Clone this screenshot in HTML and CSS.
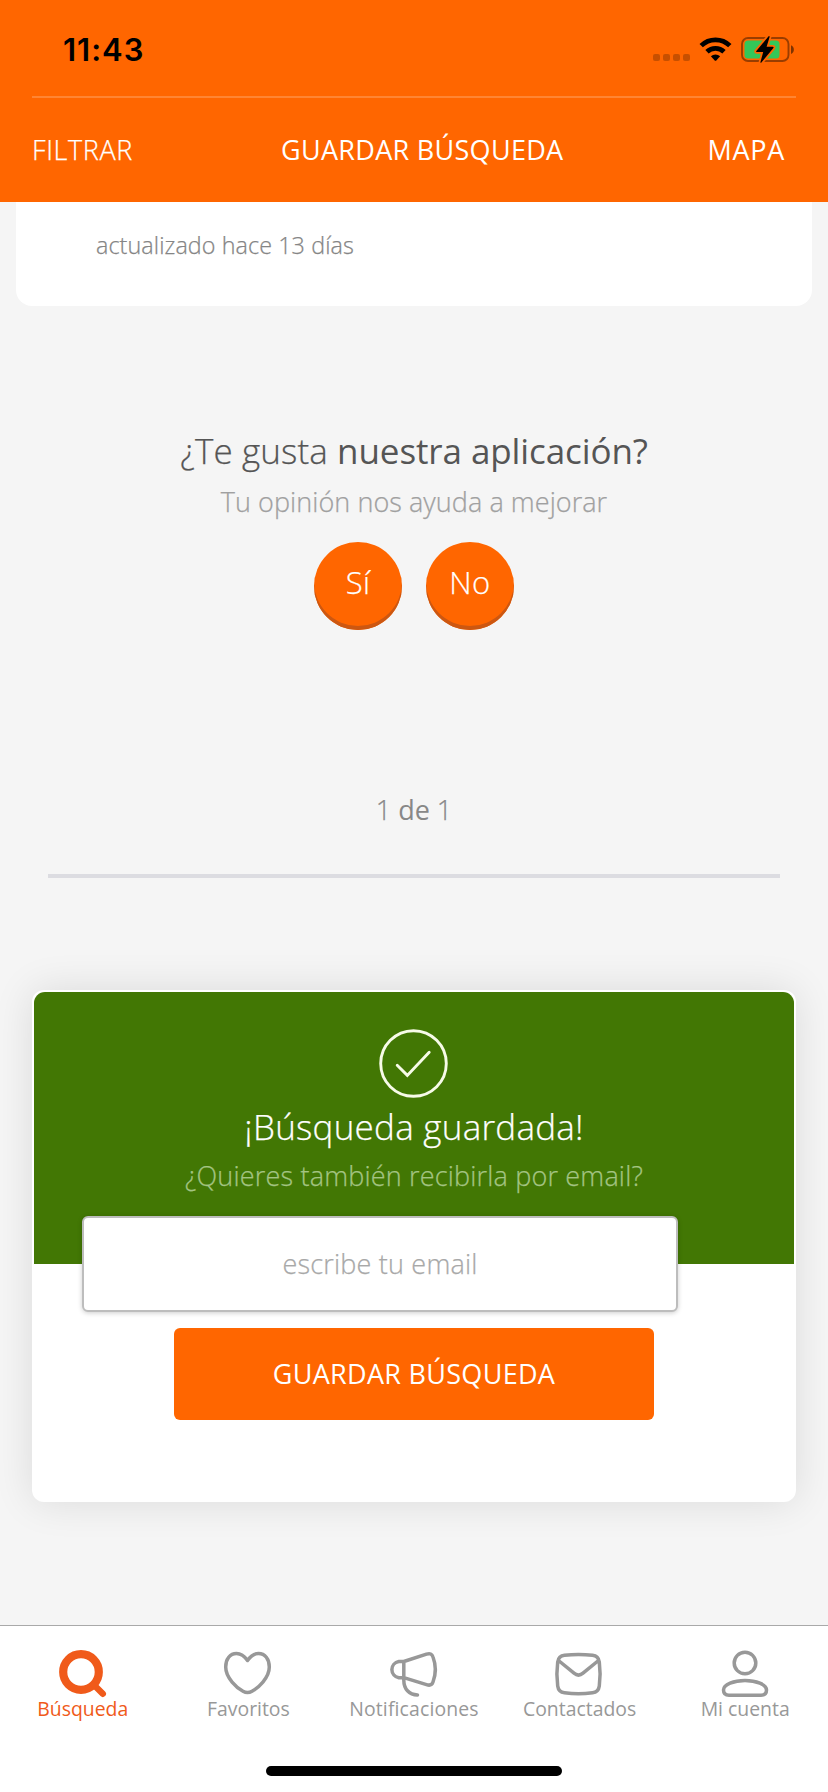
FILE: index.html
```
<!DOCTYPE html>
<html lang="es">
<head>
<meta charset="utf-8">
<title>Búsqueda</title>
<link rel="stylesheet" href="styles.css">
</head>
<body>
<div class="screen">
  <header class="header">
    <div class="status">
      <span class="time">11:43</span>
      <svg class="status-icons" viewBox="650 34 146 32">
        <g fill="#000" fill-opacity=".22"><rect x="653" y="54" width="7" height="7" rx="2"/><rect x="663" y="54" width="7" height="7" rx="2"/><rect x="673" y="54" width="7" height="7" rx="2"/><rect x="683" y="54" width="7" height="7" rx="2"/></g>
        <g fill="none" stroke="#000" stroke-width="4.8"><path d="M701.2 45.6a20.5 20.5 0 0 1 28.6 0"/><path d="M707 51.7a12.4 12.4 0 0 1 17 0"/></g>
        <path d="M710.9 56.3a6.8 6.8 0 0 1 9.2 0l-3.8 4.1q-.8.8-1.6 0z"/>
        <rect x="742" y="38" width="46.5" height="23" rx="6" fill="none" stroke="#000" stroke-opacity=".4" stroke-width="1.9"/>
        <path d="M791 45.3c3.8 1.6 3.8 7.2 0 8.8z" fill-opacity=".5"/>
        <rect x="744.5" y="40.5" width="35" height="18" rx="3.5" fill="#34c759"/>
        <path d="M768.6 36.3l-12.3 14.6q-.6 1.1.7 1.1h6.2l-2.8 10.2q.2 1 1.2 0l11.8-14.3q.6-1.2-.7-1.2h-6.1l3-9.7q0-1.3-1-.7z" stroke="#ff6600" stroke-width="3.6" paint-order="stroke"/>
      </svg>
    </div>
    <nav class="nav">
      <span class="nav-filter">FILTRAR</span>
      <span class="nav-save">GUARDAR BÚSQUEDA</span>
      <span class="nav-map">MAPA</span>
    </nav>
  </header>

  <main class="content">
    <div class="listing">actualizado hace 13 días</div>

    <section class="rate">
      <h2 class="rate-title">¿Te gusta <b>nuestra aplicación?</b></h2>
      <p class="rate-sub">Tu opinión nos ayuda a mejorar</p>
      <div class="rate-buttons">
        <button class="round yes">Sí</button>
        <button class="round no">No</button>
      </div>
    </section>

    <p class="pager">1 <span>de</span> 1</p>
    <div class="rule"></div>

    <section class="saved">
      <div class="saved-top">
        <svg class="check" viewBox="0 0 70 70" fill="none" stroke="#f7fbe8" stroke-width="2.9"><circle cx="34.5" cy="34.5" r="32.8"/><path d="M18.2 36.3L28.3 46.4L50.2 23.2" stroke-linecap="round"/></svg>
        <h2 class="saved-title">¡Búsqueda guardada!</h2>
        <p class="saved-sub">¿Quieres también recibirla por email?</p>
      </div>
      <input class="email" type="text" placeholder="escribe tu email">
      <button class="save">GUARDAR BÚSQUEDA</button>
    </section>
  </main>

  <footer class="footer">
    <div class="tabs">
      <div class="tab active">
        <svg class="icon" viewBox="55 1642 56 55"><circle cx="81" cy="1672" r="17.8" stroke-width="8.2"/><path d="M94 1685L102.8 1693.8" stroke-width="6.4"/></svg>
        <span>Búsqueda</span>
      </div>
      <div class="tab">
        <svg class="icon" viewBox="220 1642 56 55"><path d="M247.5 1660.5C244 1655.5 240 1653.5 236.5 1653.5C230 1653.5 225.7 1659 225.7 1667C225.7 1678 237 1688 243 1691.3C246 1693 249 1693 252 1691.3C258 1688 269.3 1678 269.3 1667C269.3 1659 265 1653.5 258.5 1653.5C255 1653.5 251 1655.5 247.5 1660.5Z"/></svg>
        <span>Favoritos</span>
      </div>
      <div class="tab">
        <svg class="icon" viewBox="386 1642 56 55"><path d="M403.8 1661.5H398.8a8.2 8.2 0 0 0 0 16.2H403.8L426.5 1684.7C430 1685.8 432 1685 433 1682C436 1674 436 1665 433 1657C432 1654 430 1653 426.5 1654.2L403.8 1661.5V1680C403.8 1689 409 1694.8 417.5 1695"/></svg>
        <span class="wide">Notificaciones</span>
      </div>
      <div class="tab">
        <svg class="icon" viewBox="551.5 1642 56 55"><path d="M564 1655.3Q578 1653.5 592 1655.3Q598 1656 598.8 1662Q600.4 1674 598.8 1686Q598 1692 592 1692.8Q578 1694.6 564 1692.8Q558 1692 557.2 1686Q555.6 1674 557.2 1662Q558 1656 564 1655.3ZM558 1660.5L573.5 1673.2Q578 1677 582.5 1673.2L598 1660.5"/></svg>
        <span>Contactados</span>
      </div>
      <div class="tab">
        <svg class="icon" viewBox="717 1642 56 55"><circle cx="745" cy="1663" r="10.8"/><path d="M729 1695.2C724.8 1695.2 723.5 1692.5 723.5 1690C723.5 1684.5 734 1680.5 745 1680.5S766.5 1684.5 766.5 1690C766.5 1692.5 765.2 1695.2 761 1695.2Z"/></svg>
        <span>Mi cuenta</span>
      </div>
    </div>
    <div class="home"></div>
  </footer>
</div>
</body>
</html>
```
FILE: styles.css
```
* { box-sizing: border-box; margin: 0; padding: 0; }
body { background: #f5f5f5; font-family: "Open Sans", "Noto Sans", sans-serif; font-weight: 300; }
button, input { font: inherit; border: 0; }
.screen { width: 828px; height: 1792px; display: flex; flex-direction: column; overflow: hidden; }

.header { height: 202px; background: #ff6600; color: #fff; }
.status { height: 98px; margin: 0 32px; padding-left: 31px; border-bottom: 2px solid #ff8533; display: flex; justify-content: space-between; align-items: flex-start; }
.time { font: 600 31px/99px Inter, sans-serif; color: #000; letter-spacing: 1px; }
.status-icons { width: 146px; height: 32px; margin-top: 34px; }
.nav { display: grid; grid-template-columns: 249px 1fr auto; padding: 0 43px 0 32px; font-size: 27px; line-height: 103px; }
.nav-filter { letter-spacing: .6px; -webkit-text-stroke: .25px; }
.nav-save { font-weight: 400; letter-spacing: .3px; }
.nav-map { font-weight: 400; letter-spacing: .7px; }

.content { flex: 1; display: flex; flex-direction: column; }
.listing { height: 104px; margin: 0 16px; padding: 25px 80px 0; background: #fff; border-radius: 0 0 16px 16px; color: #858585; font-size: 23.3px; line-height: 36px; letter-spacing: .1px; -webkit-text-stroke: .25px; }
.rate { margin-top: 123px; text-align: center; }
.rate-title { color: #555; font-size: 35px; line-height: 44px; font-weight: 300; letter-spacing: .1px; -webkit-text-stroke: .25px; }
.rate-title b { font-weight: 500; letter-spacing: -.1px; -webkit-text-stroke: 0; }
.rate-sub { margin-top: 11px; color: #a0a0a0; font-size: 27px; line-height: 36px; letter-spacing: .06px; -webkit-text-stroke: .25px; }
.rate-buttons { margin-top: 22px; display: flex; justify-content: center; gap: 24px; }
.round { width: 88px; height: 88px; padding-bottom: 8px; border-radius: 50%; background: #ff6600; box-shadow: inset 0 -4px 0 #cc5711; color: #fff; font-size: 31px; line-height: 80px; letter-spacing: .4px; -webkit-text-stroke: .25px; }
.pager { margin-top: 160px; text-align: center; color: #888; font-size: 27px; line-height: 40px; -webkit-text-stroke: .25px; }
.pager span { font-weight: 400; -webkit-text-stroke: 0; }
.rule { height: 4px; margin: 44px 48px 0; background: #dcdce1; }

.saved { height: 512px; margin: 112px 32px 0; padding: 2px; border-radius: 12px; background: #fff; box-shadow: 0 0 40px rgba(0, 0, 0, .11); display: flex; flex-direction: column; }
.saved-top { height: 272px; flex: none; padding-top: 37px; border-radius: 11px 11px 0 0; background: #427704; display: flex; flex-direction: column; align-items: center; }
.check { width: 70px; height: 70px; }
.saved-title { margin-top: 6px; color: #fff; font-size: 35px; line-height: 44px; font-weight: 300; letter-spacing: .25px; -webkit-text-stroke: .25px; }
.saved-sub { margin-top: 9px; color: #a4c483; font-size: 27px; line-height: 36px; letter-spacing: .18px; -webkit-text-stroke: .25px; }
.email { width: 596px; height: 96px; margin: -48px 0 0 48px; padding-bottom: 2px; border: 2px solid #bdbdbd; border-radius: 6px; background: #fff; box-shadow: 0 1px 5px rgba(0, 0, 0, .2); text-align: center; font-size: 27px; letter-spacing: .2px; -webkit-text-stroke: .25px; position: relative; }
.email::placeholder { color: #a8a8a8; opacity: 1; }
.save { width: 480px; height: 92px; margin: 16px auto 0; padding-bottom: 2px; border-radius: 6px; background: #ff6600; color: #fff; font-size: 27px; font-weight: 400; letter-spacing: .3px; }

.footer { height: 167px; padding-top: 16px; border-top: 1px solid #a9a9a9; background: #fff; }
.tabs { display: grid; grid-template-columns: repeat(5, 1fr); }
.tab { display: flex; flex-direction: column; align-items: center; color: #989898; font-size: 19.4px; font-weight: 400; line-height: 23px; }
.tab.active { color: #f05a1a; }
.wide { letter-spacing: .15px; }
.icon { width: 56px; height: 55px; overflow: visible; fill: none; stroke: currentColor; stroke-width: 3.5; stroke-linecap: round; stroke-linejoin: round; }
.home { width: 296px; height: 10px; margin: 46px auto 0; border-radius: 5px; background: #000; }
```
